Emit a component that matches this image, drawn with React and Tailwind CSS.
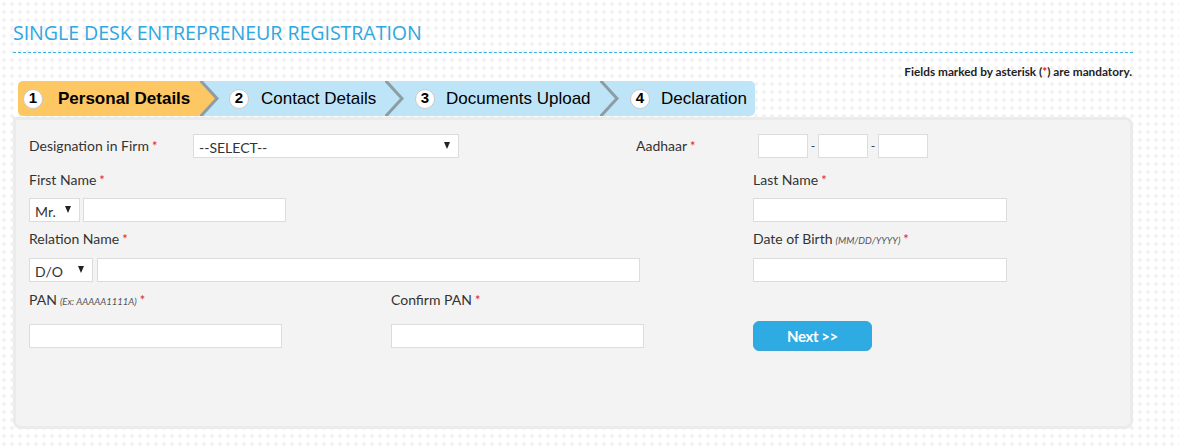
import React from "react";

const Req = () => <span className="text-[#e8202a] ml-[3px] text-[13px]">*</span>;

const Label = ({ children, hint }) => (
  <div className="text-[14px] leading-[18px] text-[#333]">
    {children}
    {hint && <span className="italic text-[9.5px] text-[#555] ml-[3px]">{hint}</span>}
    <Req />
  </div>
);

const Input = ({ className = "" }) => (
  <input
    type="text"
    className={"block h-[24px] bg-white border border-[#dcdcdc] outline-none px-1 text-[13px] " + className}
  />
);

const Select = ({ value, className = "", options }) => (
  <div className={"relative h-[24px] bg-white border border-[#dcdcdc] " + className}>
    <select
      defaultValue={value}
      className="appearance-none w-full h-full bg-transparent outline-none pl-[5px] text-[14px] text-[#333]"
    >
      {options.map((o) => (
        <option key={o}>{o}</option>
      ))}
    </select>
    <span className="absolute right-[8px] top-[7px] pointer-events-none w-0 h-0 border-l-[3.5px] border-r-[3.5px] border-t-[7px] border-l-transparent border-r-transparent border-t-[#222]"></span>
  </div>
);

const Chevron = ({ fill }) => (
  <svg className="absolute top-0 -right-[19px] z-10" width="20" height="35" viewBox="0 0 20 35">
    <polygon points="0,0 17,17.5 0,35" fill={fill} />
    <polyline points="0,-1 17,17.5 0,36" fill="none" stroke="#8e9ca4" strokeWidth="3" />
  </svg>
);

const steps = [
  { n: 1, label: "Personal Details", w: "w-[183px]", pl: "pl-[5px]", gap: "gap-[15px]", active: true },
  { n: 2, label: "Contact Details", w: "w-[185px]", pl: "pl-[28px]", gap: "gap-[12px]" },
  { n: 3, label: "Documents Upload", w: "w-[215px]", pl: "pl-[29px]", gap: "gap-[11px]" },
  { n: 4, label: "Declaration", w: "w-[154px]", pl: "pl-[29px]", gap: "gap-[11px]" },
];

const App = () => {
  return (
    <div className="w-[1179px] h-[447px] bg-white bg-[radial-gradient(circle,#f2f2f2_1.6px,transparent_2px)] bg-size-[8px_8px] font-['Lato','Liberation_Sans',sans-serif] overflow-hidden">
      <div className="w-[1120px] ml-[13px]">
        {/* heading */}
        <div className="pt-[20px] pb-[6px] border-b border-dashed border-[#34b2e8]">
          <h1 className="font-['Open_Sans',sans-serif] font-medium text-[19.6px] leading-[26px] text-[#2ea8df] tracking-[-0.05px]">
            SINGLE DESK ENTREPRENEUR REGISTRATION
          </h1>
        </div>
        <div className="mt-[12px] text-right text-[11.8px] leading-[14px] font-bold text-[#222] pr-[1px]">
          Fields marked by asterisk (<span className="text-[#e8202a]">*</span>) are mandatory.
        </div>

        {/* stepper */}
        <div className="mt-[2px] ml-[5px] flex h-[35px] w-[737px] rounded-[5px] overflow-hidden font-['Liberation_Sans',Arial,sans-serif]">
          {steps.map((s, i) => (
            <div
              key={s.n}
              className={
                "relative flex items-center shrink-0 " +
                s.w + " " + s.pl + " " + s.gap + " " +
                (s.active ? "bg-[#fdc763]" : "bg-[#bde5f7]")
              }
            >
              <span className="w-[20px] h-[20px] rounded-full bg-white border border-[#c9c9c9] flex items-center justify-center text-[15px] font-bold text-black">
                {s.n}
              </span>
              <span className={"text-[17px] text-black whitespace-nowrap " + (s.active ? "font-bold" : "")}>
                {s.label}
              </span>
              {i < steps.length - 1 && <Chevron fill={s.active ? "#fdc763" : "#bde5f7"} />}
            </div>
          ))}
        </div>

        {/* form panel */}
        <div className="mt-[1px] h-[312px] bg-[#f3f3f3] border-[3px] border-[#ebebeb] rounded-tr-[8px] rounded-b-[8px] px-[13px] pt-[14px]">
          <div className="flex items-center h-[24px]">
            <div className="w-[164px]"><Label>Designation in Firm</Label></div>
            <Select value="--SELECT--" options={["--SELECT--"]} className="w-[266px]" />
            <div className="ml-[177px] w-[122px]"><Label>Aadhaar</Label></div>
            <Input className="w-[50px]" />
            <span className="w-[10px] text-center text-[12px] text-[#333]">-</span>
            <Input className="w-[50px]" />
            <span className="w-[10px] text-center text-[12px] text-[#333]">-</span>
            <Input className="w-[50px]" />
          </div>

          <div className="flex mt-[13px]">
            <div className="w-[724px]"><Label>First Name</Label></div>
            <Label>Last Name</Label>
          </div>
          <div className="flex mt-[9px]">
            <div className="w-[724px] flex gap-[3px]">
              <Select value="Mr." options={["Mr.", "Ms.", "Mrs."]} className="w-[51px]" />
              <Input className="w-[203px]" />
            </div>
            <Input className="w-[254px]" />
          </div>

          <div className="flex mt-[8px]">
            <div className="w-[724px]"><Label>Relation Name</Label></div>
            <Label hint="(MM/DD/YYYY)">Date of Birth</Label>
          </div>
          <div className="flex mt-[8px]">
            <div className="w-[724px] flex gap-[4px]">
              <Select value="D/O" options={["D/O", "S/O", "W/O"]} className="w-[64px]" />
              <Input className="w-[543px]" />
            </div>
            <Input className="w-[254px]" />
          </div>

          <div className="flex mt-[9px]">
            <div className="w-[362px]"><Label hint="(Ex: AAAAA1111A)">PAN</Label></div>
            <Label>Confirm PAN</Label>
          </div>
          <div className="flex items-center mt-[10px]">
            <div className="w-[362px]"><Input className="w-[253px]" /></div>
            <div className="w-[362px]"><Input className="w-[253px]" /></div>
            <button className="w-[119px] h-[30px] rounded-[6px] bg-[#2eabe2] border border-[#3aa6d6] text-white font-bold text-[15px] tracking-[-0.4px]">
              Next &gt;&gt;
            </button>
          </div>
        </div>
      </div>
    </div>
  );
};

export default App;
